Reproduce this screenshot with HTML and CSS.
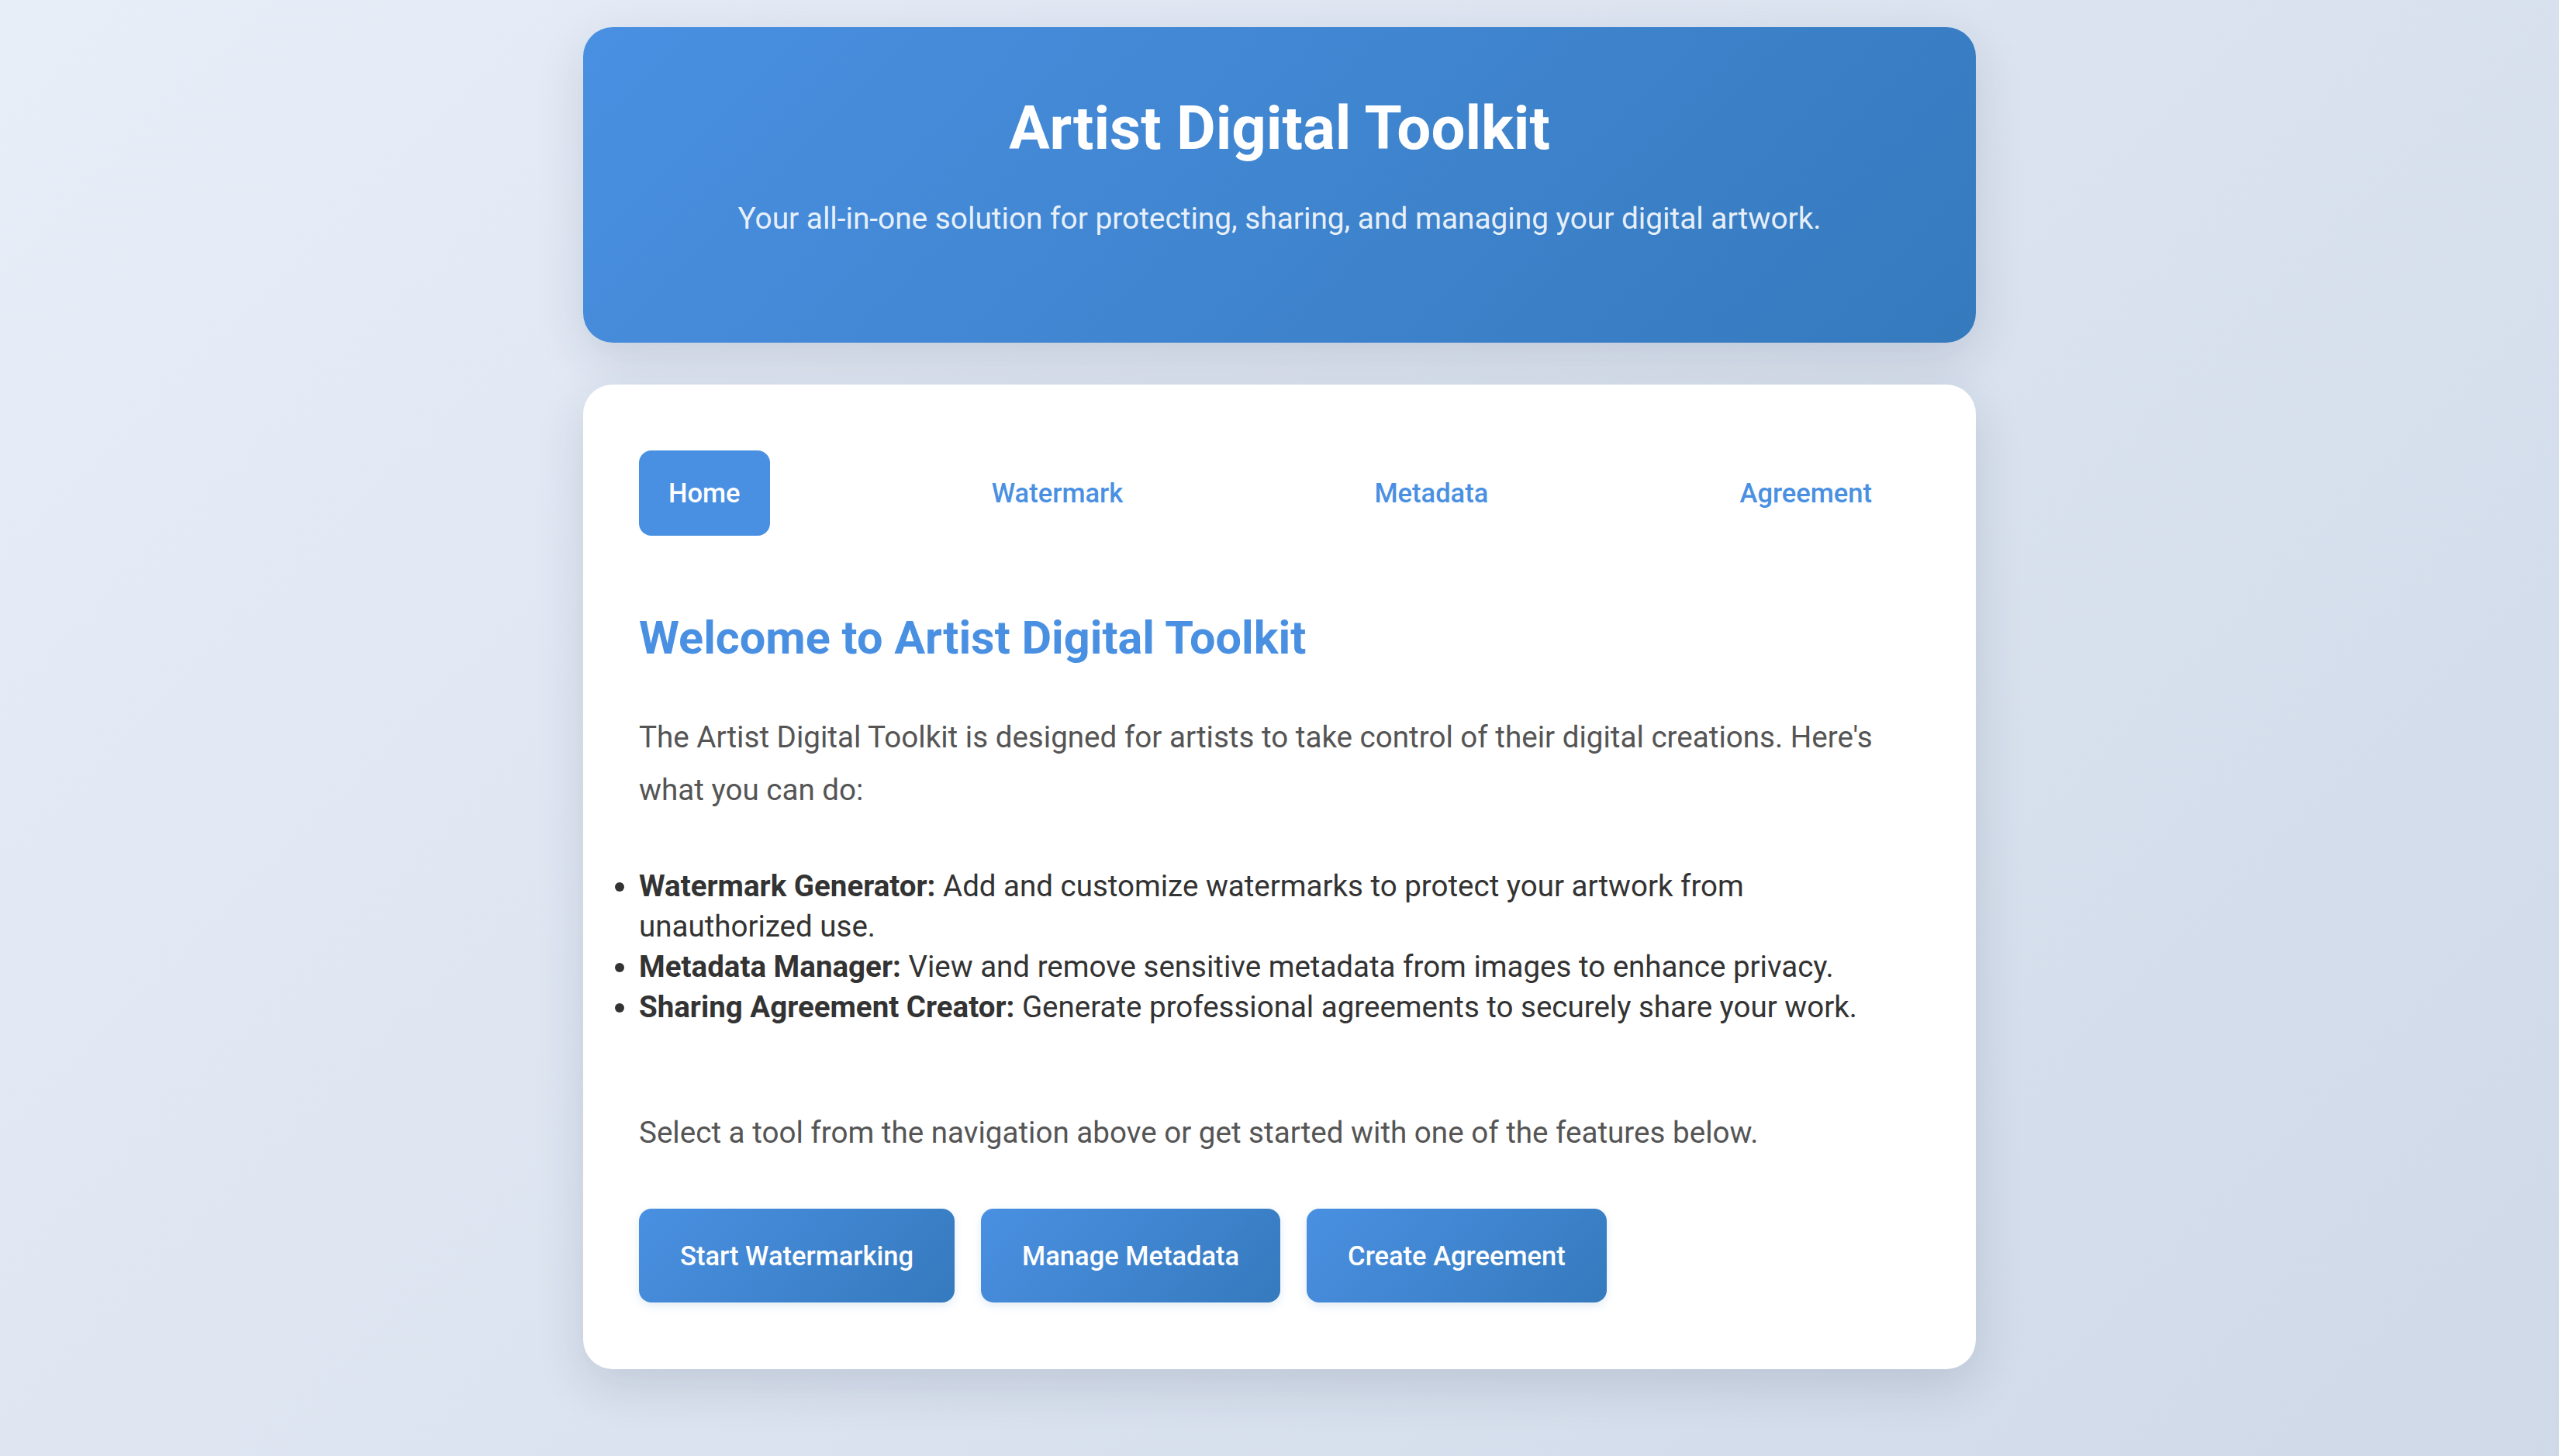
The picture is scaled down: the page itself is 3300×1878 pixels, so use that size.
FILE: index.html
```html
<!DOCTYPE html>
<html lang="en">
<head>
<meta charset="utf-8">
<title>Artist Digital Toolkit</title>
<link rel="stylesheet" href="styles.css">
</head>
<body>
<div class="page">
  <header class="hero">
    <h1 class="hero-title">Artist Digital Toolkit</h1>
    <p class="hero-sub">Your all-in-one solution for protecting, sharing, and managing your digital artwork.</p>
  </header>
  <main class="card">
    <nav class="tabs">
      <a class="tab active" href="#">Home</a>
      <a class="tab" href="#">Watermark</a>
      <a class="tab" href="#">Metadata</a>
      <a class="tab" href="#">Agreement</a>
    </nav>
    <h2 class="welcome">Welcome to Artist Digital Toolkit</h2>
    <p class="intro">The Artist Digital Toolkit is designed for artists to take control of their digital creations. Here's what you can do:</p>
    <ul class="features">
      <li><strong>Watermark Generator:</strong> Add and customize watermarks to protect your artwork from unauthorized use.</li>
      <li><strong>Metadata Manager:</strong> View and remove sensitive metadata from images to enhance privacy.</li>
      <li><strong>Sharing Agreement Creator:</strong> Generate professional agreements to securely share your work.</li>
    </ul>
    <p class="select">Select a tool from the navigation above or get started with one of the features below.</p>
    <div class="actions">
      <button class="btn">Start Watermarking</button>
      <button class="btn">Manage Metadata</button>
      <button class="btn">Create Agreement</button>
    </div>
  </main>
</div>
</body>
</html>
```

FILE: styles.css
```css
html, body {
  margin: 0;
  padding: 0;
}

body {
  min-height: 100vh;
  background: linear-gradient(135deg, #e8eef8 0%, #cfd9e8 100%);
  font-family: Roboto, "Liberation Sans", Arial, sans-serif;
  color: #333;
}

.page {
  width: 1796px;
  margin: 0 auto;
  padding: 35px 0 112px;
  display: flex;
  flex-direction: column;
  gap: 54px;
}

.hero {
  background: linear-gradient(135deg, #4a90e2 0%, #357abd 100%);
  border-radius: 38px;
  box-shadow: 0 21px 63px rgba(30, 40, 70, 0.14);
  padding: 84px 40px 130px;
  text-align: center;
  color: #fff;
}

.hero-title {
  margin: 0 0 39px;
  font-size: 78px;
  line-height: 94px;
  font-weight: 700;
}

.hero-sub {
  margin: 0;
  font-size: 38.8px;
  line-height: 60px;
  color: rgba(255, 255, 255, 0.9);
}

.card {
  background: #fff;
  border-radius: 38px;
  box-shadow: 0 21px 63px rgba(30, 40, 70, 0.14);
  padding: 85px 72px 86px;
}

.tabs {
  display: flex;
  justify-content: space-between;
  padding-right: 24px;
  margin-bottom: 96px;
}

.tab {
  height: 110px;
  line-height: 110px;
  padding: 0 38px;
  border-radius: 16px;
  font-size: 34.5px;
  font-weight: 500;
  color: #4a90e2;
  text-decoration: none;
}

.tab.active {
  background: #4a90e2;
  color: #fff;
}

.welcome {
  margin: 0 0 58px;
  font-size: 59.4px;
  line-height: 72px;
  font-weight: 700;
  color: #4a90e2;
}

.intro,
.select {
  margin: 0;
  font-size: 38.6px;
  line-height: 68px;
  color: #555;
}

.features {
  margin: 64px 0 102px;
  padding: 0;
  font-size: 38.5px;
  line-height: 52px;
  color: #333;
}

.features strong {
  font-weight: 700;
}

.actions {
  display: flex;
  gap: 34px;
  margin-top: 64px;
}

.btn {
  height: 121px;
  padding: 0 53px;
  border: none;
  border-radius: 16px;
  background: linear-gradient(135deg, #4a90e2 0%, #357abd 100%);
  color: #fff;
  font-family: Roboto, "Liberation Sans", Arial, sans-serif;
  font-size: 34.5px;
  font-weight: 500;
  box-shadow: 0 4px 12px rgba(53, 122, 189, 0.15);
}
```
